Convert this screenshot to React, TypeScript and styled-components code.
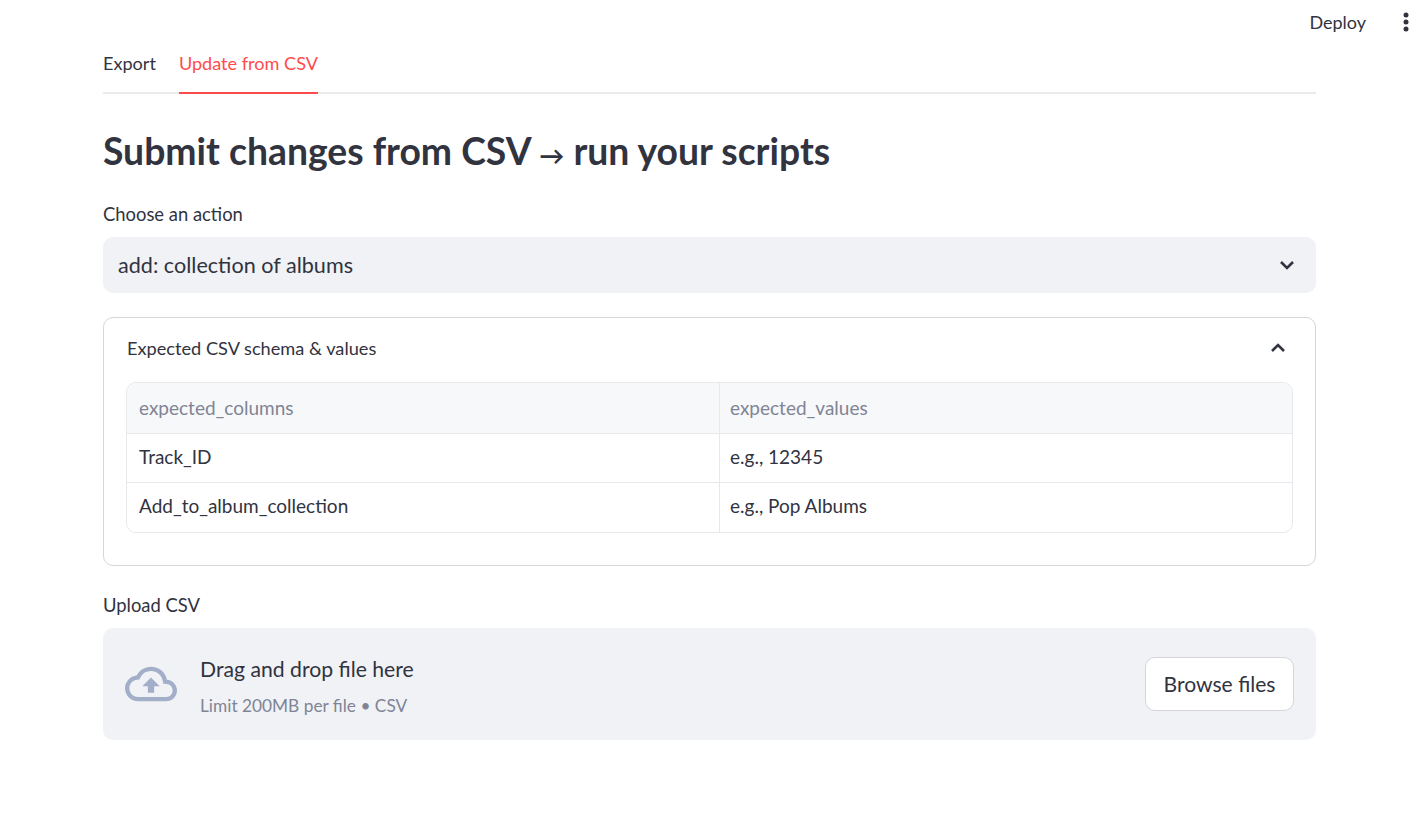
import React from 'react'
import styled, { createGlobalStyle } from 'styled-components'
import { MdOutlineCloudUpload } from 'react-icons/md'

const GlobalStyle = createGlobalStyle`
  html, body {
    margin: 0;
    padding: 0;
    background: #ffffff;
    color: #31333f;
    font-family: "Lato", "Liberation Sans", sans-serif;
  }
`

const Page = styled.div`
  height: 813px;
  overflow: hidden;
  display: flex;
  flex-direction: column;
`
const Header = styled.header`
  height: 44px;
  flex: none;
  display: flex;
  align-items: center;
  justify-content: flex-end;
  gap: 37px;
  padding-right: 18px;
`
const DeployLink = styled.span`
  font-size: 18px;
`
const Main = styled.main`
  padding: 0 111px 0 103px;
`
const Tabs = styled.nav`
  display: flex;
  gap: 23px;
  height: 50px;
  border-bottom: 2px solid #ebebeb;
  box-sizing: border-box;
`
const Tab = styled.div<{ $active?: boolean }>`
  height: 50px;
  box-sizing: border-box;
  padding-top: 7px;
  font-size: 18.1px;
  line-height: 24px;
  color: ${p => (p.$active ? '#ff4b4b' : '#31333f')};
  border-bottom: 2px solid ${p => (p.$active ? '#ff4b4b' : 'transparent')};
`
const Title = styled.h1`
  margin: 31px 0 0;
  font-size: 37.3px;
  line-height: 52px;
  font-weight: 700;
`
const Arrow = styled.span`
  font-size: 25px;
  line-height: 0;
`
const Label = styled.div`
  font-size: 18.4px;
  line-height: 24px;
  margin-bottom: 11px;
`
const ActionLabel = styled(Label)`
  margin-top: 25px;
`
const Select = styled.div`
  height: 56px;
  background: #f0f2f6;
  border-radius: 10px;
  display: flex;
  align-items: center;
  justify-content: space-between;
  padding: 0 21px 0 15px;
  font-size: 21.6px;
`
const Expander = styled.section`
  margin-top: 24px;
  height: 249px;
  box-sizing: border-box;
  border: 1px solid #d5d6d9;
  border-radius: 10px;
  padding: 0 22px;
`
const ExpanderHead = styled.div`
  height: 64px;
  box-sizing: border-box;
  display: flex;
  align-items: center;
  justify-content: space-between;
  font-size: 18.2px;
  padding: 0 7px 5px 1px;
`
const Table = styled.div`
  border: 1px solid #e6e8ec;
  border-radius: 10px;
  overflow: hidden;
  display: grid;
  grid-template-columns: 593px 1fr;
`
const Cell = styled.div<{ $head?: boolean; $last?: boolean }>`
  height: ${p => (p.$head ? 51 : 49)}px;
  box-sizing: border-box;
  display: flex;
  align-items: center;
  padding: 0 12px ${p => (p.$head ? 2 : p.$last ? 4 : 3)}px;
  font-size: 19px;
  color: ${p => (p.$head ? '#808495' : '#31333f')};
  background: ${p => (p.$head ? '#f7f8fa' : '#ffffff')};
  border-bottom: ${p => (p.$last ? 'none' : '1px solid #e6e8ec')};
  &:nth-child(odd) {
    border-right: 1px solid #e6e8ec;
  }
  &:nth-child(even) {
    padding-left: 10px;
  }
`
const UploadLabel = styled(Label)`
  margin-top: 27px;
`
const Dropzone = styled.div`
  height: 112px;
  background: #f0f2f6;
  border-radius: 10px;
  display: flex;
  align-items: center;
  padding: 0 22px;
`
const CloudIcon = styled(MdOutlineCloudUpload)`
  flex: none;
  font-size: 52px;
  color: #a3afc9;
`
const DropText = styled.div`
  margin-left: 23px;
  padding-top: 4px;
  flex: 1;
`
const DropTitle = styled.div`
  font-size: 21.2px;
  line-height: 28px;
`
const DropHint = styled.div`
  margin-top: 11px;
  font-size: 17.3px;
  line-height: 24px;
  color: #808495;
`
const Browse = styled.button`
  width: 149px;
  height: 54px;
  padding: 0 0 2px;
  background: #ffffff;
  border: 1px solid #d5d6d9;
  border-radius: 10px;
  color: #31333f;
  font-family: inherit;
  font-size: 21.1px;
`

const Chevron = ({ up }: { up?: boolean }) => (
  <svg width="16" height="10" viewBox="0 0 16 10" fill="none">
    <path
      d={up ? 'M2 8 L8 2 L14 8' : 'M2 2 L8 8 L14 2'}
      stroke="#31333f"
      strokeWidth="2.6"
    />
  </svg>
)

const Kebab = () => (
  <svg width="6" height="20" viewBox="0 0 6 20" fill="#31333f">
    <circle cx="3" cy="3" r="2.5" />
    <circle cx="3" cy="10" r="2.5" />
    <circle cx="3" cy="17" r="2.5" />
  </svg>
)

export default function App() {
  return (
    <Page>
      <GlobalStyle />
      <Header>
        <DeployLink>Deploy</DeployLink>
        <Kebab />
      </Header>
      <Main>
        <Tabs>
          <Tab>Export</Tab>
          <Tab $active>Update from CSV</Tab>
        </Tabs>
        <Title>
          Submit changes from CSV <Arrow>→</Arrow> run your scripts
        </Title>
        <ActionLabel>Choose an action</ActionLabel>
        <Select>
          add: collection of albums
          <Chevron />
        </Select>
        <Expander>
          <ExpanderHead>
            Expected CSV schema &amp; values
            <Chevron up />
          </ExpanderHead>
          <Table>
            <Cell $head>expected_columns</Cell>
            <Cell $head>expected_values</Cell>
            <Cell>Track_ID</Cell>
            <Cell>e.g., 12345</Cell>
            <Cell $last>Add_to_album_collection</Cell>
            <Cell $last>e.g., Pop Albums</Cell>
          </Table>
        </Expander>
        <UploadLabel>Upload CSV</UploadLabel>
        <Dropzone>
          <CloudIcon />
          <DropText>
            <DropTitle>Drag and drop file here</DropTitle>
            <DropHint>Limit 200MB per file • CSV</DropHint>
          </DropText>
          <Browse>Browse files</Browse>
        </Dropzone>
      </Main>
    </Page>
  )
}
